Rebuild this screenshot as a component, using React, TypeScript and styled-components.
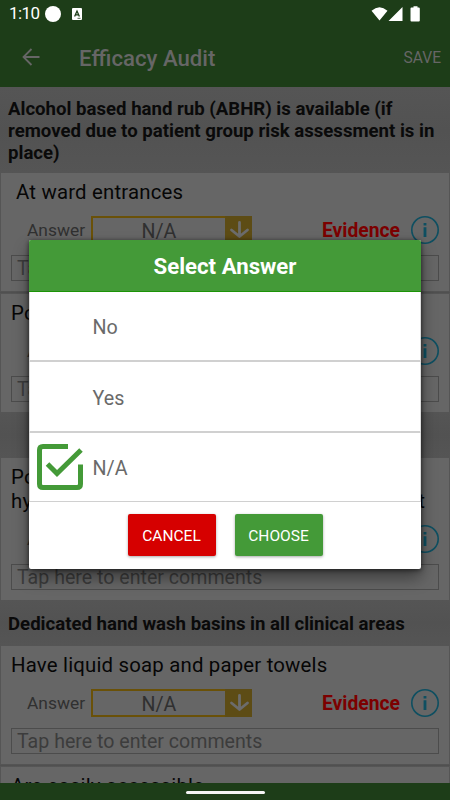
import React from "react";
import styled, { createGlobalStyle } from "styled-components";

const GlobalStyle = createGlobalStyle`
  * { box-sizing: border-box; }
  body { margin: 0; background: #1d3d18; font-family: Roboto, sans-serif; overflow: hidden; }
`;

const Screen = styled.div`
  position: relative;
  width: 450px;
  height: 800px;
  display: flex;
  flex-direction: column;
  overflow: hidden;
  background: #555;
`;

const StatusBar = styled.div`
  display: flex;
  align-items: center;
  height: 27px;
  flex: none;
  padding: 0 30px 0 9px;
  background: #1d3d18;
  color: #fff;
`;

const Clock = styled.span`
  width: 36px;
  font-size: 17px;
  line-height: 27px;
  letter-spacing: -0.6px;
`;

const Dot = styled.span`
  width: 16px;
  height: 16px;
  border-radius: 50%;
  background: #fff;
`;

const KeyboardBadge = styled.svg`
  margin-left: 11px;
`;

const StatusIcons = styled.svg`
  margin-left: auto;
`;

const AppBar = styled.header`
  display: flex;
  align-items: center;
  height: 60px;
  flex: none;
  padding: 0 9px 0 20px;
  background: #1d3d18;
  color: #666;
`;

const Title = styled.h1`
  margin: 0 auto 0 37px;
  padding-top: 1px;
  font-size: 22.2px;
  font-weight: 500;
  line-height: 30px;
`;

const SaveAction = styled.span`
  padding-top: 1px;
  font-size: 15.6px;
  line-height: 30px;
`;

const Content = styled.main`
  flex: 1;
  min-height: 0;
  overflow: hidden;
`;

const SectionHeader = styled.h2<{ $height: number }>`
  display: flex;
  align-items: center;
  height: ${(p) => p.$height}px;
  margin: 0;
  padding: 2px 6px 0 8px;
  background: linear-gradient(#555, #525252 50%, #555);
  color: #0a0a0a;
  font-size: 18.6px;
  font-weight: 700;
  line-height: 22px;
`;

const Card = styled.section`
  margin: 0 1px;
  padding: 7px 10px 10px;
  background: #666;
`;

const Divider = styled.div`
  height: 3px;
  background: linear-gradient(#565656, #505050, #585858);
`;

const Question = styled.p<{ $indent?: boolean }>`
  margin: 0 0 12px;
  padding-left: ${(p) => (p.$indent ? 5 : 0)}px;
  color: #060606;
  font-size: 20.4px;
  letter-spacing: 0.18px;
  line-height: 24px;
`;

const FullLine = styled.span`
  display: block;
  width: 414px;
  text-align-last: justify;
  white-space: nowrap;
`;

const AnswerRow = styled.div`
  display: flex;
  height: 28px;
  align-items: center;
  padding-left: 16px;
`;

const AnswerLabel = styled.span`
  width: 64px;
  color: #303030;
  font-size: 17.4px;
  line-height: 26px;
`;

const Select = styled.div`
  display: flex;
  width: 161px;
  height: 28px;
  border: 2px solid #6a5108;
  border-right: 0;
  background: #666;
`;

const SelectValue = styled.span`
  flex: 1;
  text-align: center;
  color: #303030;
  font-size: 19.6px;
  line-height: 27px;
`;

const SelectArrow = styled.svg`
  margin: -2px 0;
  flex: none;
`;

const Evidence = styled.span`
  margin-left: auto;
  padding-top: 1px;
  color: #7c0000;
  font-size: 19.3px;
  font-weight: 700;
  line-height: 28px;
`;

const InfoIcon = styled.svg`
  margin-left: 11px;
  flex: none;
`;

const CommentBox = styled.div`
  height: 26px;
  margin-top: 11px;
  padding-left: 5px;
  border: 1px solid #4c4c4c;
  color: #3c3c3c;
  font-size: 19.6px;
  line-height: 26px;
  white-space: nowrap;
`;

const NavigationBar = styled.footer`
  display: flex;
  justify-content: center;
  align-items: center;
  height: 17px;
  flex: none;
  background: #1d3d18;
`;

const HomeHandle = styled.span`
  width: 79px;
  height: 3px;
  margin-top: 1px;
  border-radius: 2px;
  background: #f4f4f4;
`;

const Dialog = styled.div`
  position: absolute;
  left: 29px;
  top: 240px;
  width: 392px;
  height: 329px;
  border-radius: 2px;
  overflow: hidden;
  background: #fff;
  box-shadow: 0 9px 16px rgba(0, 0, 0, 0.4), 0 1px 5px rgba(0, 0, 0, 0.6);
`;

const DialogTitle = styled.h2`
  height: 52px;
  margin: 0;
  border-bottom: 1px solid #1b9406;
  background: #449a38;
  color: #fff;
  font-size: 22.2px;
  font-weight: 700;
  line-height: 53px;
  text-align: center;
`;

const Option = styled.div<{ $height: number; $line: number }>`
  display: flex;
  align-items: center;
  height: ${(p) => p.$height}px;
  padding-left: 7px;
  border: solid #ddd;
  border-width: 0 1px ${(p) => p.$line}px;
  border-bottom-color: #d0d0d0;
  color: #6a6a6a;
  font-size: 19.7px;
`;

const OptionText = styled.span`
  padding-top: 3px;
`;

const CheckSlot = styled.span`
  display: flex;
  width: 55.5px;
  flex: none;
`;

const Actions = styled.div`
  display: flex;
  justify-content: center;
  gap: 19px;
  padding-top: 12px;
`;

const ActionButton = styled.button<{ $color: string }>`
  width: 88px;
  height: 42px;
  padding: 2px 0 0;
  border: 0;
  border-radius: 2px;
  background: ${(p) => p.$color};
  box-shadow: 0 1px 3px rgba(0, 0, 0, 0.35);
  color: #fff;
  font-family: inherit;
  font-size: 15.5px;
`;

function AnswerControls() {
  return (
    <>
      <AnswerRow>
        <AnswerLabel>Answer</AnswerLabel>
        <Select>
          <SelectValue>N/A</SelectValue>
          <SelectArrow width="27" height="28" viewBox="0 0 27 28">
            <path fill="#5d4c15" d="M0 0h27v28H0z" />
            <path
              d="M14.500 6.500v14M6.500 14l8 6.500 8-6.500"
              fill="none"
              stroke="#6c6c6c"
              strokeWidth="2.8"
              strokeLinecap="round"
              strokeLinejoin="round"
            />
          </SelectArrow>
        </Select>
        <Evidence>Evidence</Evidence>
        <InfoIcon width="28" height="28" viewBox="0 0 28 28">
          <circle cx="14" cy="14" r="13.2" fill="none" stroke="#0e4f61" strokeWidth="1.6" />
          <path fill="#0e4f61" d="M12.6 7h2.8v2.4h-2.8zM12.6 11.3h2.8v9.7h-2.8z" />
        </InfoIcon>
      </AnswerRow>
      <CommentBox>Tap here to enter comments</CommentBox>
    </>
  );
}

export default function App() {
  return (
    <>
      <GlobalStyle />
      <Screen>
        <StatusBar>
          <Clock>1:10</Clock>
          <Dot />
          <KeyboardBadge width="10" height="12" viewBox="0 0 10 12">
            <rect width="10" height="12" rx="1" fill="#fff" />
            <path d="M2.6 8.4L5 3l2.4 5.4M3.4 6.8h3.2" fill="none" stroke="#1d3d18" strokeWidth="1.3" />
            <path d="M5.5 10.3h3" stroke="#1d3d18" strokeWidth=".8" />
          </KeyboardBadge>
          <StatusIcons width="49" height="16" viewBox="0 0 49 16">
            <path
              fill="#fff"
              d="M.5 4.8Q8.500 -2.500 16.500 4.800L8.500 14.500zM31.500 1v14H17.500zM40.500 1.500h2V.3h4v1.200h1.300q1 0 1 1v12q0 1-1 1h-7.300q-1 0-1-1v-12q0-1 1-1z"
            />
          </StatusIcons>
        </StatusBar>
        <AppBar>
          <svg width="22" height="22" viewBox="0 0 22 22" fill="none" stroke="#666" strokeWidth="1.8">
            <path d="M19.500 11H3M11.500 3l-8 8 8 8" />
          </svg>
          <Title>Efficacy Audit</Title>
          <SaveAction>SAVE</SaveAction>
        </AppBar>
        <Content>
          <SectionHeader $height={86}>
            Alcohol based hand rub (ABHR) is available (if removed due to patient group risk assessment is in place)
          </SectionHeader>
          <Card>
            <Question $indent>At ward entrances</Question>
            <AnswerControls />
          </Card>
          <Divider />
          <Card>
            <Question>Point of care</Question>
            <AnswerControls />
          </Card>
          <SectionHeader $height={46} />
          <Card>
            <Question>
              Posters showing correct hand
              <FullLine>hygiene technique are on display at point</FullLine>
            </Question>
            <AnswerControls />
          </Card>
          <SectionHeader $height={46}>Dedicated hand wash basins in all clinical areas</SectionHeader>
          <Card>
            <Question>Have liquid soap and paper towels</Question>
            <AnswerControls />
          </Card>
          <Divider />
          <Card>
            <Question>Are easily accessible</Question>
          </Card>
        </Content>
        <NavigationBar>
          <HomeHandle />
        </NavigationBar>
        <Dialog role="dialog">
          <DialogTitle>Select Answer</DialogTitle>
          <Option $height={70} $line={2}>
            <CheckSlot />
            <OptionText>No</OptionText>
          </Option>
          <Option $height={71} $line={2}>
            <CheckSlot />
            <OptionText>Yes</OptionText>
          </Option>
          <Option $height={69} $line={1}>
            <CheckSlot>
              <svg width="48" height="46" viewBox="0 0 48 46" fill="none" stroke="#449a38" strokeWidth="5">
                <path d="M31 2.500H6Q2.500 2.500 2.500 6v34q0 3.500 3.500 3.500h34q3.500 0 3.500-3.500V20.500" />
                <path d="M10.500 20l9.500 9.500L44 6" />
              </svg>
            </CheckSlot>
            <OptionText>N/A</OptionText>
          </Option>
          <Actions>
            <ActionButton $color="#d60000">CANCEL</ActionButton>
            <ActionButton $color="#449a38">CHOOSE</ActionButton>
          </Actions>
        </Dialog>
      </Screen>
    </>
  );
}
